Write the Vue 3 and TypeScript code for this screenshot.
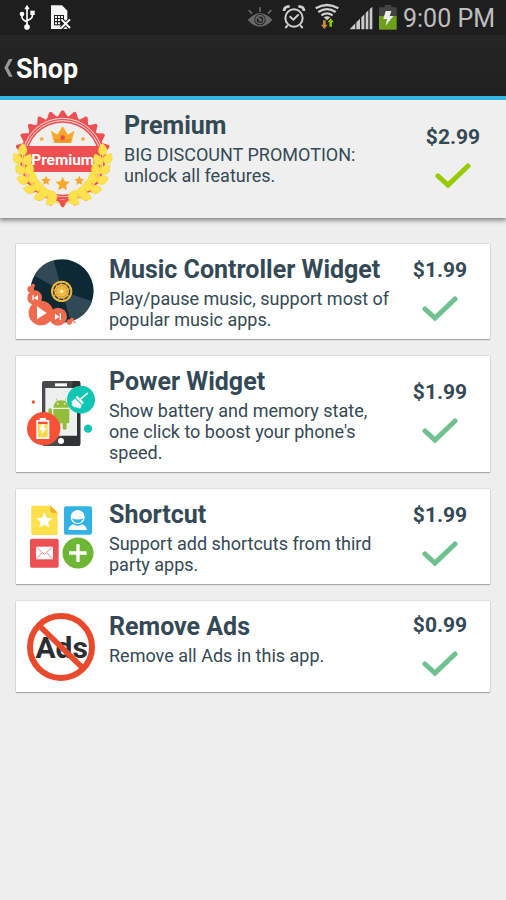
<script setup lang="ts">
interface Product {
  id: 'music' | 'power' | 'shortcut' | 'ads'
  title: string
  description: string
  price: string
}

interface Leaf {
  x: number
  y: number
  angle: number
}

const products: Product[] = [
  {
    id: 'music',
    title: 'Music Controller Widget',
    description: 'Play/pause music, support most of popular music apps.',
    price: '$1.99',
  },
  {
    id: 'power',
    title: 'Power Widget',
    description: "Show battery and memory state, one click to boost your phone's speed.",
    price: '$1.99',
  },
  {
    id: 'shortcut',
    title: 'Shortcut',
    description: 'Support add shortcuts from third party apps.',
    price: '$1.99',
  },
  {
    id: 'ads',
    title: 'Remove Ads',
    description: 'Remove all Ads in this app.',
    price: '$0.99',
  },
]

// Serrated rim of the premium seal
function sealRim(cx: number, cy: number, outer: number, inner: number, teeth: number): string {
  const step = (Math.PI * 2) / teeth
  const at = (r: number, a: number) =>
    `${(cx + r * Math.sin(a)).toFixed(1)} ${(cy - r * Math.cos(a)).toFixed(1)}`
  let d = `M${at(outer, -step * 0.1)}`
  for (let i = 0; i < teeth; i++) {
    const a = i * step
    d += `Q${at(outer + 3, a)} ${at(outer, a + step * 0.1)}`
    d += `L${at(inner + 4, a + step * 0.36)}`
    d += `Q${at(inner - 3, a + step * 0.5)} ${at(inner + 4, a + step * 0.64)}`
    d += `L${at(outer, a + step * 0.9)}`
  }
  return d + 'Z'
}

const rim = sealRim(188, 191, 144, 127, 24)

const leaves: Leaf[] = [
  { x: 68, y: 164, angle: 2 },
  { x: 52, y: 191, angle: -32 },
  { x: 83, y: 194, angle: 28 },
  { x: 60, y: 224, angle: -44 },
  { x: 89, y: 222, angle: 18 },
  { x: 68, y: 255, angle: -68 },
  { x: 98, y: 248, angle: 8 },
  { x: 88, y: 283, angle: -84 },
  { x: 113, y: 271, angle: -4 },
  { x: 119, y: 304, angle: -112 },
  { x: 132, y: 289, angle: -16 },
  { x: 153, y: 317, angle: -130 },
  { x: 156, y: 301, angle: -34 },
]

const star = 'M0 -10L2.9 -3.6L9.7 -2.9L4.6 1.7L6 8.6L0 5L-6 8.6L-4.6 1.7L-9.7 -2.9L-2.9 -3.6Z'
</script>

<template>
  <div class="screen">
    <div class="status">
      <div class="status-group">
        <svg class="ico-usb" viewBox="57 0 51 105" aria-hidden="true">
          <g fill="none" stroke="#fff" stroke-width="5">
            <path d="M81 24V80M66 44V52Q66 58 72 61L81 66M97 40V48Q97 54 91 57L81 62" />
          </g>
          <path d="M81 14L89 28H73Z" fill="#fff" />
          <circle cx="81" cy="81" r="8.5" fill="#fff" />
          <circle cx="66" cy="42" r="7" fill="#fff" />
          <path d="M91 32H104V45H91Z" fill="#fff" />
        </svg>
        <svg class="ico-sim" viewBox="150 0 66 105" aria-hidden="true">
          <path d="M153 16H186L202 32V87H153Z" fill="#f5f5f5" />
          <path d="M162 45H192V76H162Z" fill="#222" />
          <path d="M165 48h6v6h-6zM174 48h6v6h-6zM183 48h6v6h-6zM165 57h6v6h-6zM174 57h6v6h-6zM165 67h6v6h-6zM174 67h6v6h-6z" fill="#f5f5f5" />
          <path d="M184 58L210 84M210 58L184 84" stroke="#222" stroke-width="12" />
          <path d="M184 58L210 84M210 58L184 84" stroke="#fff" stroke-width="6" />
        </svg>
      </div>
      <div class="status-group status-right">
        <svg class="ico-wide" viewBox="21 0 84 105" aria-hidden="true">
          <path d="M23 60Q40 40 60 40T97 60Q80 80 60 80T23 60Z" fill="#686868" />
          <circle cx="60" cy="59" r="17" fill="#1e1e1e" />
          <circle cx="60" cy="59" r="12" fill="none" stroke="#686868" stroke-width="5" />
          <path d="M60 59L52 50" stroke="#686868" stroke-width="5" />
          <circle cx="61" cy="60" r="5" fill="#686868" />
          <path d="M26 30L36 41M60 22V36M94 30L84 41" stroke="#686868" stroke-width="5" />
        </svg>
        <svg class="ico-wide" viewBox="123 0 84 105" aria-hidden="true">
          <circle cx="162" cy="54" r="26" fill="none" stroke="#d0d0d0" stroke-width="6" />
          <path d="M149 49L160 59L176 43" fill="none" stroke="#d0d0d0" stroke-width="6" />
          <path d="M132 33Q132 19 149 19M192 33Q192 19 175 19" fill="none" stroke="#d0d0d0" stroke-width="8" />
          <path d="M143 76L136 84M181 76L188 84" stroke="#d0d0d0" stroke-width="6" />
        </svg>
        <svg class="ico-wide" viewBox="225 0 84 105" aria-hidden="true">
          <g fill="none" stroke="#d0d0d0" stroke-width="7">
            <path d="M227 25Q261 5 295 25" />
            <path d="M235 36Q261 19 287 36" />
            <path d="M244 46Q261 34 278 46" />
          </g>
          <path d="M251 52Q261 46 271 52L261 61Z" fill="#d0d0d0" />
          <path d="M249 61H257V74H263L253 87L243 74H249Z" fill="#cc8a3c" />
          <path d="M268 80H276V67H282L272 55L262 67H268Z" fill="#8bc400" />
        </svg>
        <svg class="ico-signal" viewBox="327 0 72 105" aria-hidden="true">
          <path d="M329 88L346 70V88ZM349 88V67L360 56V88ZM364 88V52L373 43V88ZM377 88V39L385 31V88ZM389 88V28L397 20V88Z" fill="#cacaca" />
        </svg>
        <svg class="ico-battery" viewBox="417 0 54 105" aria-hidden="true">
          <path d="M434 15H454V22H470V49H417V22H434Z" fill="#444" />
          <path d="M417 48H470V89H417Z" fill="#6ea01a" />
          <path d="M437 33H454L449 48H460L437 77L441 57H430Z" fill="#eee" />
        </svg>
        <time class="clock">9:00 PM</time>
      </div>
    </div>

    <header class="bar">
      <button class="back" type="button" aria-label="Back">
        <svg viewBox="12 174 27 60" aria-hidden="true">
          <path d="M27 177H38L24 203L38 230H27L13 203Z" fill="#989898" />
        </svg>
      </button>
      <h1 class="bar-title">Shop</h1>
    </header>

    <main>
      <section class="premium">
        <svg class="seal" viewBox="36 39 306 306" role="img" aria-label="Premium seal">
          <path :d="rim" fill="#ee4f51" />
          <circle cx="188" cy="191" r="121" fill="none" stroke="#f5e6e2" stroke-width="3" />
          <circle cx="188" cy="191" r="114" fill="none" stroke="#f5e6e2" stroke-width="3" />
          <circle cx="188" cy="191" r="108" fill="#f1efeb" />
          <path d="M75 153H301V231H75Z" fill="#ee4f51" />
          <path d="M153 107L172 119L188 94L204 119L223 107L214 143H162Z" fill="#f6a72c" />
          <path d="M164 132H212L210 143H166Z" fill="#ee9424" />
          <circle cx="188" cy="128" r="7" fill="#e94b4d" />
          <g fill="#f6a72c">
            <path :d="star" transform="translate(125 132) scale(.75)" />
            <path :d="star" transform="translate(249 132) scale(.75)" />
            <path :d="star" transform="translate(138 257) scale(1.5)" />
            <path :d="star" transform="translate(188 267) scale(2.2)" />
            <path :d="star" transform="translate(238 257) scale(1.5)" />
          </g>
          <path d="M176 302H200M172 310H204" stroke="#ee4f51" stroke-width="4" />
          <g v-for="side in [1, -1]" :key="side" :transform="side === 1 ? undefined : 'translate(376 0) scale(-1 1)'">
            <path d="M67 172C70 245 105 300 180 325" fill="none" stroke="#f3d944" stroke-width="4" />
            <path
              v-for="(leaf, i) in leaves"
              :key="i"
              d="M0 -19C8 -12 14 -4 13 4C12 12 7 16 2 17H-2C-7 16 -12 12 -13 4C-14 -4 -8 -12 0 -19Z"
              fill="#fde24e"
              stroke="#f0d045"
              stroke-width="1"
              :transform="`translate(${leaf.x} ${leaf.y}) rotate(${leaf.angle})`"
            />
          </g>
          <text class="seal-text" x="188" y="209" text-anchor="middle">Premium</text>
        </svg>
        <div class="info">
          <h2 class="title">Premium</h2>
          <p class="desc">BIG DISCOUNT PROMOTION: unlock all features.</p>
        </div>
        <div class="buy">
          <span class="price">$2.99</span>
          <svg class="check check-premium" viewBox="0 0 36 26" role="img" aria-label="Purchased">
            <path d="M3 13L13 22L33 3" />
          </svg>
        </div>
      </section>

      <ul class="list">
        <li v-for="product in products" :key="product.id" class="card">
          <svg v-if="product.id === 'music'" class="icon" viewBox="51 66 204 204" aria-hidden="true">
            <circle cx="156" cy="165" r="95" fill="#0c2934" />
            <path d="M156 165L131 73A95 95 0 0 0 73 119ZM156 165L246 196A95 95 0 0 1 182 256Z" fill="#304954" />
            <circle cx="155" cy="166" r="32" fill="#f3b83f" />
            <circle cx="155" cy="166" r="24" fill="none" stroke="#263a3b" stroke-width="4" stroke-dasharray="13 3" />
            <circle cx="155" cy="166" r="17" fill="none" stroke="#a18439" stroke-width="2" stroke-dasharray="7 3" />
            <circle cx="155" cy="166" r="5" fill="#fff4c8" />
            <g fill="#f06b4d">
              <circle cx="74" cy="185" r="22" />
              <circle cx="93" cy="231" r="37" />
              <circle cx="144" cy="242" r="27" />
              <circle cx="62" cy="160" r="10" />
              <circle cx="69" cy="149" r="6" />
              <circle cx="178" cy="258" r="8" />
              <circle cx="186" cy="251" r="6" />
              <circle cx="194" cy="259" r="3" />
            </g>
            <path d="M81 211L110 231L81 250ZM67 178H71V193H67ZM84 178V193L71 186ZM135 233L148 242L135 251ZM149 232H153V252H149Z" fill="#fff" />
          </svg>

          <svg v-else-if="product.id === 'power'" class="icon" viewBox="51 90 204 204" aria-hidden="true">
            <rect x="96" y="93" width="115" height="195" rx="6" fill="#484b4d" />
            <path d="M188 93H205Q211 93 211 99V282Q211 288 205 288H150Z" fill="#303234" />
            <path d="M135 100H171V109H135Z" fill="#fff" />
            <path d="M106 114H201V257H106Z" fill="#eef0f0" />
            <circle cx="153" cy="273" r="9" fill="#fff" />
            <g fill="#95bd3c">
              <path d="M130 173Q132 151 153 151T177 173Z" />
              <path d="M130 177H178V216Q178 220 174 220H134Q130 220 130 216Z" />
              <rect x="115" y="175" width="11" height="39" rx="5" />
              <rect x="139" y="210" width="12" height="29" rx="5" />
              <rect x="158" y="210" width="12" height="29" rx="5" />
            </g>
            <path d="M138 145L144 156M169 145L163 156" stroke="#95bd3c" stroke-width="2" />
            <circle cx="143" cy="162" r="2.5" fill="#fff" />
            <circle cx="164" cy="162" r="2.5" fill="#fff" />
            <circle cx="213" cy="149" r="42" fill="#12c6b4" />
            <path d="M232 130L213 146" stroke="#fff" stroke-width="5" stroke-linecap="round" />
            <path d="M202 137L222 158L216 162L197 143Z" fill="#fff" />
            <path d="M195 146L215 165Q213 173 210 176L203 171L204 175L195 170L196 174L184 164Q191 160 183 155Q190 152 195 146Z" fill="#fff" />
            <circle cx="234" cy="236" r="12.5" fill="#12c6b4" />
            <circle cx="70" cy="156" r="5" fill="#fa5136" />
            <circle cx="101" cy="236" r="50" fill="#fa5136" />
            <path d="M89 204H108V210H118V267H79V210H89Z" fill="#fff" />
            <path d="M84 215H113V222H84Z" fill="#fa5136" />
            <path d="M84 222H113V262H84Z" fill="#fbd948" />
            <path d="M95 222H106L102 234H110L93 256L97 240H88Z" fill="#fff" />
          </svg>

          <svg v-else-if="product.id === 'shortcut'" class="icon" viewBox="51 53 204 204" aria-hidden="true">
            <path d="M68 61H121L143 82V145Q143 149 139 149H68Q64 149 64 145V65Q64 61 68 61Z" fill="#fde04a" />
            <path d="M121 61L143 82H125Q121 82 121 78Z" fill="#f5ad2b" />
            <path :d="star" fill="#fff" transform="translate(103 106) scale(2.5)" />
            <rect x="162" y="63" width="84" height="85" rx="6" fill="#31b4e5" />
            <circle cx="203" cy="95" r="21" fill="#fff" />
            <path d="M186 99Q203 106 220 99Q215 113 203 113T186 99Z" fill="#31b4e5" />
            <path d="M175 134Q178 120 190 117Q203 126 216 117Q228 120 231 134Z" fill="#fff" />
            <rect x="60" y="160" width="86" height="87" rx="6" fill="#ec5053" />
            <path d="M78 184H129V222H78Z" fill="#fff" />
            <path d="M79 185L103 207L128 185M79 221L97 202M128 221L110 202" fill="none" stroke="#ec777a" stroke-width="2.5" />
            <circle cx="204" cy="203" r="46.5" fill="#6eb635" />
            <path d="M199 177H209V198H230V208H209V230H199V208H177V198H199Z" fill="#fff" />
          </svg>

          <svg v-else class="icon" viewBox="51 53 204 204" aria-hidden="true">
            <text class="ads-text" x="155" y="187" text-anchor="middle">Ads</text>
            <circle cx="153" cy="155" r="93" fill="none" stroke="#e94a2b" stroke-width="18" />
            <path d="M88 91L219 219" stroke="#e94a2b" stroke-width="17" />
          </svg>

          <div class="info">
            <h2 class="title">{{ product.title }}</h2>
            <p class="desc">{{ product.description }}</p>
          </div>
          <div class="buy">
            <span class="price">{{ product.price }}</span>
            <svg class="check" viewBox="0 0 36 26" role="img" aria-label="Purchased">
              <path d="M3 13L13 22L33 3" />
            </svg>
          </div>
        </li>
      </ul>
    </main>
  </div>
</template>

<style>
body {
  margin: 0;
  background: #eee;
}
</style>

<style scoped>
.screen {
  min-height: 100vh;
  background: #eee;
  color: #344955;
  font-family: Roboto, "Liberation Sans", sans-serif;
}

.status {
  display: flex;
  justify-content: space-between;
  height: 35px;
  padding: 0 11px 0 19px;
  background: #1e1e1e;
}

.status-group {
  display: flex;
  gap: 14px;
}

.status-right {
  gap: 6px;
}

.status svg {
  display: block;
  height: 35px;
}

.ico-usb {
  width: 17px;
}

.ico-sim {
  width: 22px;
}

.ico-wide {
  width: 28px;
}

.ico-signal {
  width: 24px;
}

.ico-battery {
  width: 18px;
}

.clock {
  color: #bebebe;
  font-size: 25px;
  line-height: 38px;
}

.bar {
  position: relative;
  z-index: 1;
  display: flex;
  align-items: center;
  gap: 3px;
  box-sizing: border-box;
  height: 65px;
  padding: 4px 4px 0;
  border-bottom: 4px solid #33b5e5;
  background: linear-gradient(#252525, #202020);
}

.back {
  display: block;
  padding: 0;
  border: 0;
  background: none;
}

.back svg {
  display: block;
  width: 9px;
  height: 20px;
}

.bar-title {
  margin: 0;
  padding-top: 2px;
  color: #fff;
  font-size: 27px;
  line-height: 30px;
}

.premium {
  display: flex;
  align-items: center;
  min-height: 118px;
  padding: 0 25px 0 12px;
  background: #efefef;
  box-shadow: 0 1px 5px 1px rgba(0, 0, 0, 0.5);
}

.seal {
  flex: none;
  width: 102px;
  height: 102px;
}

.seal-text {
  fill: #fff;
  font-size: 46px;
  font-weight: 700;
}

.ads-text {
  fill: #2c2d30;
  font-size: 90px;
  font-weight: 700;
}

.info {
  flex: 1;
  align-self: flex-start;
  min-width: 0;
  padding: 11px 0 9px 14px;
}

.premium .info {
  padding-left: 10px;
}

.title {
  margin: 0 0 3px;
  font-size: 25px;
  font-weight: 700;
  line-height: 30px;
}

.desc {
  max-width: 285px;
  margin: 0;
  font-size: 18px;
  line-height: 21px;
}

.buy {
  display: flex;
  flex: none;
  flex-direction: column;
  align-items: center;
  gap: 14px;
  width: 56px;
  padding-bottom: 4px;
}

.price {
  font-size: 21px;
  font-weight: 700;
  line-height: 24px;
}

.check {
  display: block;
  width: 36px;
  height: 26px;
  fill: none;
  stroke: #6fc190;
  stroke-width: 5px;
  stroke-linecap: round;
}

.check-premium {
  stroke: #99cc00;
}

.list {
  display: flex;
  flex-direction: column;
  gap: 17px;
  margin: 0;
  padding: 26px 16px;
  list-style: none;
}

.card {
  display: flex;
  align-items: center;
  box-sizing: border-box;
  min-height: 91px;
  padding: 0 22px 0 11px;
  background: #fff;
  box-shadow: 0 0 1px rgba(0, 0, 0, 0.3), 0 1px 1px rgba(0, 0, 0, 0.25);
}

.icon {
  flex: none;
  width: 68px;
  height: 68px;
}
</style>
